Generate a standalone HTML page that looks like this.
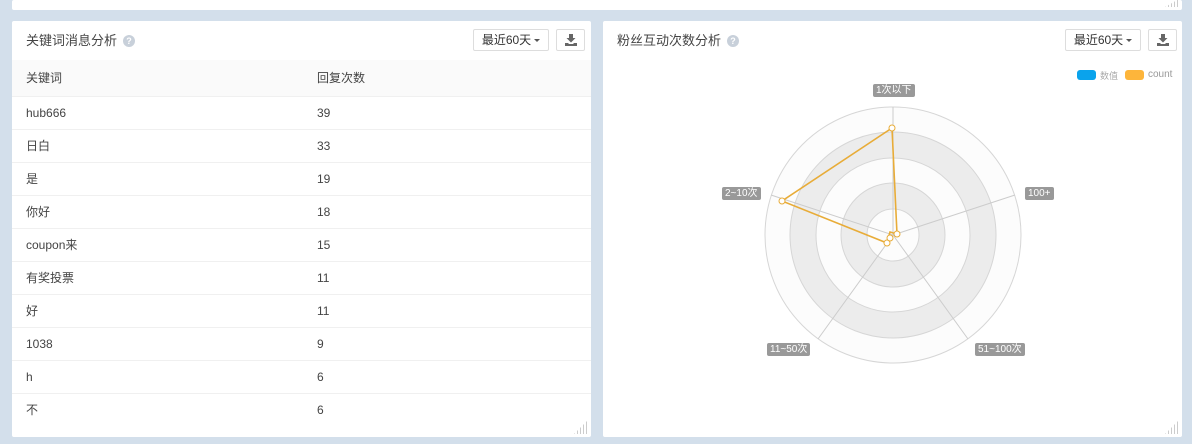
<!DOCTYPE html>
<html><head><meta charset="utf-8"><style>
*{margin:0;padding:0;box-sizing:border-box}
body{width:1192px;height:444px;background:#d3dfeb;font-family:"Liberation Sans","Noto Sans CJK SC",sans-serif;position:relative;overflow:hidden;color:#333}
.p{position:absolute;background:#fff;border-radius:2px}
.t{position:absolute;left:14px;top:9px;font-size:13px;color:#444}
.q{display:inline-block;width:12px;height:12px;border-radius:50%;background:#c8d0da;color:#fff;font-size:9px;text-align:center;line-height:12px;margin-left:6px;vertical-align:1px;font-weight:bold}
.b{position:absolute;top:8px;height:22px;border:1px solid #ddd;border-radius:2px;font-size:12px;line-height:20px;text-align:center;color:#333;background:#fff}
.b svg{position:absolute;left:8px;top:4px}
.car{display:inline-block;border-left:3px solid transparent;border-right:3px solid transparent;border-top:3px solid #555;vertical-align:2px;margin-left:3px}
.row{position:absolute;left:0;width:579px;height:33px;border-top:1px solid #f0f0f0;font-size:12px;line-height:32px;color:#444}
.row span{position:absolute}
.c1{left:14px}.c2{left:305px}
.lab{position:absolute;background:#999;color:#fff;font-size:10px;height:13px;line-height:13px;padding:0 3px;border-radius:2px}
.grip{position:absolute;right:3px;bottom:3px;width:14px;height:14px;background:repeating-linear-gradient(90deg,#ccc 0 1px,transparent 1px 3px);clip-path:polygon(100% 0,100% 100%,0 100%)}
</style></head><body>
<div class="p" style="left:12px;top:0;width:1170px;height:10px"><div class="grip" style="height:8px;width:14px"></div></div>
<div class="p" style="left:12px;top:21px;width:579px;height:416px">
 <div class="t">关键词消息分析<span class="q">?</span></div>
 <div class="b" style="left:461px;width:76px">最近60天<span class="car"></span></div>
 <div class="b" style="left:544px;width:29px"><svg width="12" height="12" viewBox="0 0 12 12"><path d="M4 0h4v4h2.5L6 8.5 1.5 4H4z" fill="#666"/><path d="M0 9h3l1 1h4l1-1h3v3H0z" fill="#666"/></svg></div>
 <div class="row" style="top:39px;height:36px;background:#fafafa;border:none;line-height:36px"><span class="c1">关键词</span><span class="c2">回复次数</span></div>
 <div class="row" style="top:75px"><span class="c1">hub666</span><span class="c2">39</span></div>
 <div class="row" style="top:108px"><span class="c1">日白</span><span class="c2">33</span></div>
 <div class="row" style="top:141px"><span class="c1">是</span><span class="c2">19</span></div>
 <div class="row" style="top:174px"><span class="c1">你好</span><span class="c2">18</span></div>
 <div class="row" style="top:207px"><span class="c1">coupon来</span><span class="c2">15</span></div>
 <div class="row" style="top:240px"><span class="c1">有奖投票</span><span class="c2">11</span></div>
 <div class="row" style="top:273px"><span class="c1">好</span><span class="c2">11</span></div>
 <div class="row" style="top:306px"><span class="c1">1038</span><span class="c2">9</span></div>
 <div class="row" style="top:339px"><span class="c1">h</span><span class="c2">6</span></div>
 <div class="row" style="top:372px"><span class="c1">不</span><span class="c2">6</span></div>
 <div class="grip"></div>
</div>
<div class="p" style="left:603px;top:21px;width:579px;height:416px">
 <div class="t">粉丝互动次数分析<span class="q">?</span></div>
 <div class="b" style="left:462px;width:76px">最近60天<span class="car"></span></div>
 <div class="b" style="left:545px;width:29px"><svg width="12" height="12" viewBox="0 0 12 12"><path d="M4 0h4v4h2.5L6 8.5 1.5 4H4z" fill="#666"/><path d="M0 9h3l1 1h4l1-1h3v3H0z" fill="#666"/></svg></div>
 <div style="position:absolute;left:474px;top:49px;width:19px;height:10px;background:#0aa3ec;border-radius:3px"></div>
 <div style="position:absolute;left:497px;top:48px;font-size:9px;color:#aaa">数值</div>
 <div style="position:absolute;left:522px;top:49px;width:19px;height:10px;background:#fdb53b;border-radius:3px"></div>
 <div style="position:absolute;left:545px;top:48px;font-size:10px;color:#999">count</div>
 <div class="grip"></div>
</div>
<svg style="position:absolute;left:0;top:0" width="1192" height="444">
<g stroke="#d6d6d6" stroke-width="1">
<circle cx="893" cy="235" r="128" fill="#fcfcfc"/>
<circle cx="893" cy="235" r="103" fill="#ececec"/>
<circle cx="893" cy="235" r="77" fill="#fcfcfc"/>
<circle cx="893" cy="235" r="52" fill="#ececec"/>
<circle cx="893" cy="235" r="26" fill="#fcfcfc"/>
<path d="M893 235V107M893 235L1015 195M893 235L968 339M893 235L818 339M893 235L771 195" stroke="#ccc"/>
</g>
<polygon points="892,128 782,201 887,243 890,232 897,234" fill="none" stroke="#e8ac38" stroke-width="1.6"/>
<g fill="#fff" stroke="#e8ac38" stroke-width="1">
<circle cx="892" cy="128" r="3"/><circle cx="782" cy="201" r="3"/><circle cx="887" cy="243" r="3"/><circle cx="890" cy="238" r="3"/><circle cx="897" cy="234" r="3"/>
</g>
</svg>
<div class="lab" style="left:873px;top:84px">1次以下</div>
<div class="lab" style="left:722px;top:187px">2~10次</div>
<div class="lab" style="left:1025px;top:187px">100+</div>
<div class="lab" style="left:767px;top:343px">11~50次</div>
<div class="lab" style="left:975px;top:343px">51~100次</div>
</body></html>
